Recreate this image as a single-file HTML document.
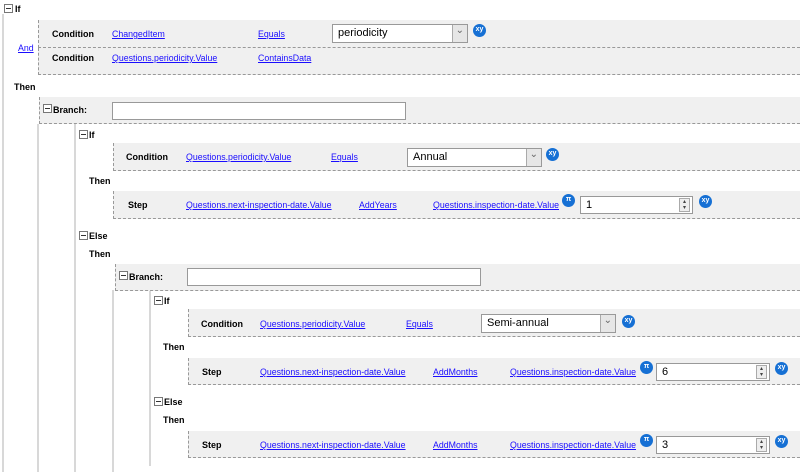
<!DOCTYPE html>
<html><head><style>
body{margin:0;width:800px;height:472px;overflow:hidden;background:#fff;font-family:"Liberation Sans",sans-serif;font-size:9px;color:#000;position:relative}
.a{position:absolute;white-space:nowrap}
.b{font-weight:bold}
.l{color:#1a0dff;text-decoration:underline;font-size:8.8px}
.v{position:absolute;width:2px;background:#d8d8d8}
.p{position:absolute;background:#f0f0f0;border-left:1px dashed #999;border-bottom:1px dashed #999;right:0}
.t{position:absolute;width:7px;height:7px;border:1px solid #777;background:#fff}
.t:after{content:"";position:absolute;left:1px;top:3px;width:5px;height:1px;background:#333}
.in{position:absolute;background:#fff;border:1px solid #999;box-sizing:border-box;font-size:11px;padding:2px 5px;line-height:12px}
.sel:after{content:"";position:absolute;right:0;top:0;bottom:0;width:14px;background:#e6e6e6;border-left:1px solid #aaa}
.sel:before{content:"⌄";position:absolute;right:3px;top:0;color:#666;z-index:2;font-size:10px}
.sp:after{content:"▴\A▾";white-space:pre;position:absolute;right:2px;top:1px;width:9px;height:12px;border:1px solid #aaa;background:#eee;font-size:6px;line-height:6px;text-align:center;color:#444}
.ic{position:absolute;width:13px;height:13px;border-radius:50%;background:#1670d4;color:#fff;font-size:7px;line-height:12px;text-align:center;font-weight:bold}
</style></head><body>
<div class="v" style="left:2px;top:14px;height:458px"></div>
<div class="v" style="left:37px;top:124px;height:348px"></div>
<div class="v" style="left:74px;top:124px;height:348px"></div>
<div class="v" style="left:112px;top:290px;height:182px"></div>
<div class="v" style="left:149px;top:290px;height:176px"></div>

<div class="t" style="left:4px;top:4px"></div><div class="a b" style="left:15px;top:4px">If</div>
<div class="p" style="left:38px;top:20px;height:27px"></div>
<div class="p" style="left:38px;top:48px;height:26px"></div>
<div class="a l" style="left:18px;top:43px">And</div>
<div class="a b" style="left:52px;top:29px">Condition</div>
<div class="a l" style="left:112px;top:29px">ChangedItem</div>
<div class="a l" style="left:258px;top:29px">Equals</div>
<div class="in sel" style="left:332px;top:24px;width:136px;height:19px">periodicity</div>
<div class="ic" style="left:473px;top:24px">xy</div>
<div class="a b" style="left:52px;top:53px">Condition</div>
<div class="a l" style="left:112px;top:53px">Questions.periodicity.Value</div>
<div class="a l" style="left:258px;top:53px">ContainsData</div>

<div class="a b" style="left:14px;top:82px">Then</div>
<div class="p" style="left:39px;top:97px;height:26px"></div>
<div class="t" style="left:43px;top:104px"></div><div class="a b" style="left:53px;top:105px">Branch:</div>
<div class="in" style="left:112px;top:102px;width:294px;height:18px"></div>

<div class="t" style="left:79px;top:130px"></div><div class="a b" style="left:89px;top:130px">If</div>
<div class="p" style="left:113px;top:143px;height:27px"></div>
<div class="a b" style="left:126px;top:152px">Condition</div>
<div class="a l" style="left:186px;top:152px">Questions.periodicity.Value</div>
<div class="a l" style="left:331px;top:152px">Equals</div>
<div class="in sel" style="left:407px;top:148px;width:135px;height:19px">Annual</div>
<div class="ic" style="left:546px;top:148px">xy</div>
<div class="a b" style="left:89px;top:176px">Then</div>
<div class="p" style="left:113px;top:191px;height:27px"></div>
<div class="a b" style="left:128px;top:200px">Step</div>
<div class="a l" style="left:186px;top:200px">Questions.next-inspection-date.Value</div>
<div class="a l" style="left:359px;top:200px">AddYears</div>
<div class="a l" style="left:433px;top:200px">Questions.inspection-date.Value</div>
<div class="ic" style="left:562px;top:194px">π</div>
<div class="in sp" style="left:580px;top:196px;width:113px;height:18px">1</div>
<div class="ic" style="left:699px;top:195px">xy</div>
<div class="t" style="left:79px;top:231px"></div><div class="a b" style="left:89px;top:231px">Else</div>
<div class="a b" style="left:89px;top:249px">Then</div>

<div class="p" style="left:115px;top:264px;height:26px"></div>
<div class="t" style="left:119px;top:271px"></div><div class="a b" style="left:129px;top:272px">Branch:</div>
<div class="in" style="left:187px;top:268px;width:294px;height:18px"></div>
<div class="t" style="left:154px;top:296px"></div><div class="a b" style="left:164px;top:296px">If</div>
<div class="p" style="left:188px;top:309px;height:27px"></div>
<div class="a b" style="left:201px;top:319px">Condition</div>
<div class="a l" style="left:260px;top:319px">Questions.periodicity.Value</div>
<div class="a l" style="left:406px;top:319px">Equals</div>
<div class="in sel" style="left:481px;top:314px;width:135px;height:19px">Semi-annual</div>
<div class="ic" style="left:622px;top:315px">xy</div>
<div class="a b" style="left:163px;top:342px">Then</div>
<div class="p" style="left:188px;top:358px;height:26px"></div>
<div class="a b" style="left:202px;top:367px">Step</div>
<div class="a l" style="left:260px;top:367px">Questions.next-inspection-date.Value</div>
<div class="a l" style="left:433px;top:367px">AddMonths</div>
<div class="a l" style="left:510px;top:367px">Questions.inspection-date.Value</div>
<div class="ic" style="left:640px;top:361px">π</div>
<div class="in sp" style="left:656px;top:363px;width:114px;height:18px">6</div>
<div class="ic" style="left:775px;top:362px">xy</div>
<div class="t" style="left:154px;top:397px"></div><div class="a b" style="left:164px;top:397px">Else</div>
<div class="a b" style="left:163px;top:415px">Then</div>
<div class="p" style="left:188px;top:431px;height:26px"></div>
<div class="a b" style="left:202px;top:440px">Step</div>
<div class="a l" style="left:260px;top:440px">Questions.next-inspection-date.Value</div>
<div class="a l" style="left:433px;top:440px">AddMonths</div>
<div class="a l" style="left:510px;top:440px">Questions.inspection-date.Value</div>
<div class="ic" style="left:640px;top:434px">π</div>
<div class="in sp" style="left:656px;top:436px;width:114px;height:18px">3</div>
<div class="ic" style="left:775px;top:435px">xy</div>
</body></html>
